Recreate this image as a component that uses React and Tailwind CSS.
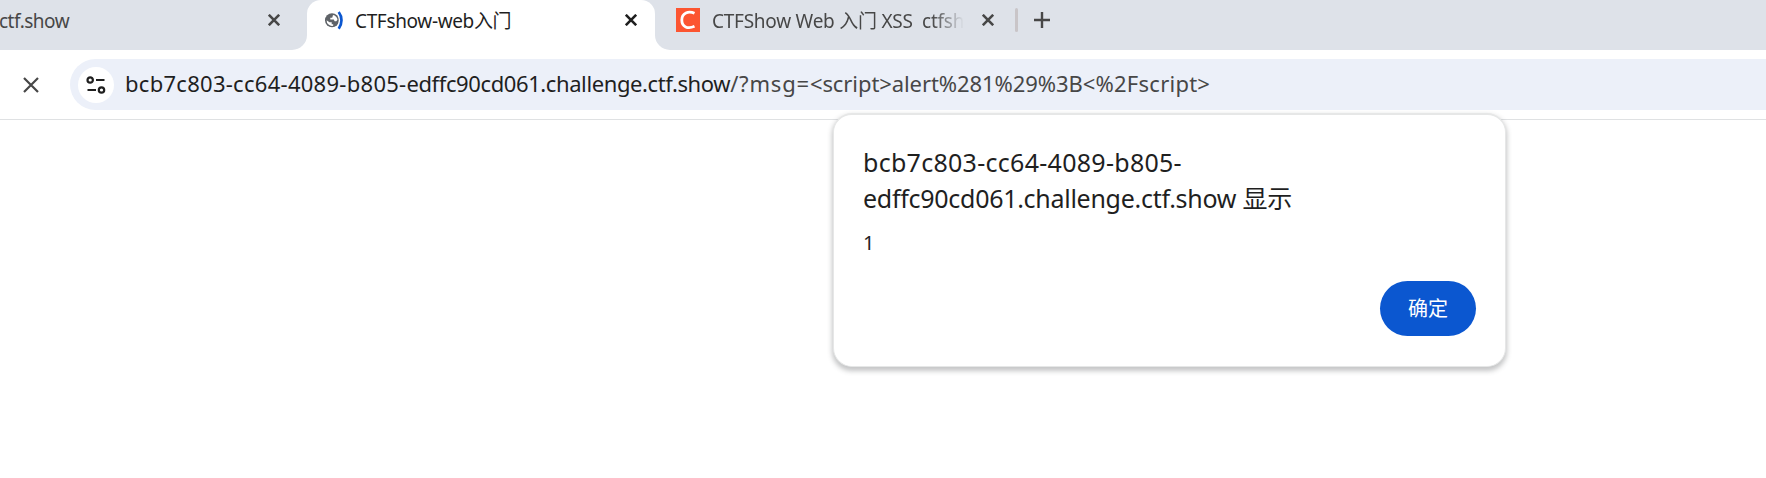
import React from "react";

const TabClose = ({ className }) => (
  <svg className={className} width="12" height="12" viewBox="0 0 12 12" fill="none" stroke="currentColor" strokeWidth="2.6">
    <path d="M0.8 0.8 11.2 11.2M11.2 0.8 0.8 11.2" />
  </svg>
);

const LoadingGlobe = () => (
  <svg width="20" height="20" viewBox="0 0 20 20" className="shrink-0">
    <circle cx="8" cy="10.300" r="7" fill="#5f6368" />
    <path d="M2.600 10.200 5.500 12.300H7.700V14.200H9.200V15.800A5.500 5.500 0 0 1 2.600 10.200Z" fill="#fff" />
    <path d="M9 5C11.400 5.400 13.300 7.400 13.500 9.800L12.300 11.200H10.600L9.800 9.500H6.300V7.800H8.200L8.600 6.500Z" fill="#fff" />
    <path d="M14.600 1.500C18.500 6.500 18.500 14 14.600 19L12.800 17.300C15.400 13 15.400 8 12.800 3.300Z" fill="#fff" />
    <path d="M14.700 2C18.400 6.800 18.400 13.800 14.700 18.700" stroke="#0b57d0" strokeWidth="2.700" fill="none" />
  </svg>
);

const SiteIcon = () => (
  <svg width="24" height="24" viewBox="0 0 24 24" className="shrink-0">
    <rect width="24" height="24" fill="#fc5531" />
    <path d="M18.500 5.300C12.500 2.500 5.800 5 5.800 12c0 7 6 9.300 12.700 6.300" stroke="#fff" strokeWidth="2.800" fill="none" />
  </svg>
);

const TuneIcon = () => (
  <svg width="20" height="18" viewBox="0 0 20 18" fill="none" stroke="#1f1f1f" strokeWidth="2.200">
    <circle cx="4.200" cy="4" r="2.700" />
    <path d="M10 4h8.500M1.500 14h8.500" />
    <circle cx="15.500" cy="14" r="2.700" />
  </svg>
);

function TabStrip() {
  return (
    <div className="flex h-[50px] text-[19px] leading-[24px]">
      <div className="w-[307px] bg-white">
        <div className="flex h-full items-start rounded-br-[15px] bg-[#dee2e9] text-[#474747]">
          <span className="-ml-px mt-[9px] w-[269px] tracking-[-0.5px]">ctf.show</span>
          <TabClose className="mt-[14px]" />
        </div>
      </div>
      <div className="w-[348px] bg-[#dee2e9]">
        <div className="flex h-full items-start rounded-t-[14px] bg-white text-[#1f1f1f]">
          <div className="ml-[17px] mt-[10px] w-[31px]"><LoadingGlobe /></div>
          <span className="mt-[9px] w-[270px] whitespace-nowrap tracking-[-0.35px]">CTFshow-web入门</span>
          <TabClose className="mt-[14px]" />
        </div>
      </div>
      <div className="flex-1 bg-white">
        <div className="flex h-full items-start rounded-bl-[15px] bg-[#dee2e9] text-[#474747]">
          <div className="ml-[21px] mt-[8px] w-[36px]"><SiteIcon /></div>
          <span className="mt-[9px] w-[252px] overflow-hidden whitespace-pre tracking-[-0.25px] [mask-image:linear-gradient(to_right,#000_220px,transparent_252px)]">CTFShow Web 入门 XSS  ctfsh</span>
          <TabClose className="ml-[18px] mt-[14px]" />
          <div className="ml-[21px] mt-[8px] h-[24px] w-[3px] rounded-full bg-[#c9c5c8]" />
          <svg className="ml-[16px] mt-[12px]" width="16" height="16" viewBox="0 0 16 16" stroke="currentColor" strokeWidth="2.400">
            <path d="M8 0v16M0 8h16" />
          </svg>
        </div>
      </div>
    </div>
  );
}

function Toolbar() {
  return (
    <div className="flex h-[70px] items-start border-b border-[#dfe1e3] bg-white">
      <svg className="ml-[23px] mt-[27px] shrink-0" width="16" height="16" viewBox="0 0 16 16" stroke="#474747" strokeWidth="2.200">
        <path d="M1 1 15 15M15 1 1 15" />
      </svg>
      <div className="ml-[31px] mt-[9px] flex h-[51px] flex-1 items-center rounded-l-full bg-[#ecf0f9]">
        <div className="ml-[8px] flex size-[36px] items-center justify-center rounded-full bg-white">
          <TuneIcon />
        </div>
        <div className="mb-[3px] ml-[11px] whitespace-nowrap text-[22px] leading-[30px] text-[#474747]">
          <span className="tracking-[0.28px] text-[#1f1f1f]">bcb7c803-cc64-4089-b805-</span>
          <span className="tracking-[-0.4px] text-[#1f1f1f]">edffc90cd061.challenge.ctf.show</span>
          <span className="tracking-[0.8px]">/?msg=</span>
          <span className="tracking-[-0.08px]">&lt;script&gt;alert%281%29%3B</span>
          <span className="tracking-[0.25px]">&lt;%2Fscript&gt;</span>
        </div>
      </div>
    </div>
  );
}

function AlertDialog() {
  return (
    <div role="dialog" className="absolute left-[833px] top-[113px] flex h-[254px] w-[673px] flex-col rounded-[19px] border border-t-2 border-[#e6e7e7] bg-white pl-[29px] pr-[29px] pt-[29px] shadow-[0_3px_5px_1px_rgba(60,64,67,0.3)]">
      <h1 className="whitespace-nowrap text-[25px] leading-[36px] text-[#1f1f1f]">
        <span className="tracking-[0.28px]">bcb7c803-cc64-4089-b805-</span>
        <br />
        <span className="tracking-[-0.28px]">edffc90cd061.challenge.ctf.show 显示</span>
      </h1>
      <p className="mt-[13px] text-[20px] leading-[28px] text-[#1f1f1f]">1</p>
      <button className="mt-[24px] h-[55px] w-[96px] self-end rounded-full bg-[#0b57d0] text-[20px] text-white">确定</button>
    </div>
  );
}

export default function App() {
  return (
    <div className="relative h-[478px] w-full overflow-hidden bg-white font-['Noto_Sans','Noto_Sans_CJK_SC',sans-serif]">
      <TabStrip />
      <Toolbar />
      <AlertDialog />
    </div>
  );
}
